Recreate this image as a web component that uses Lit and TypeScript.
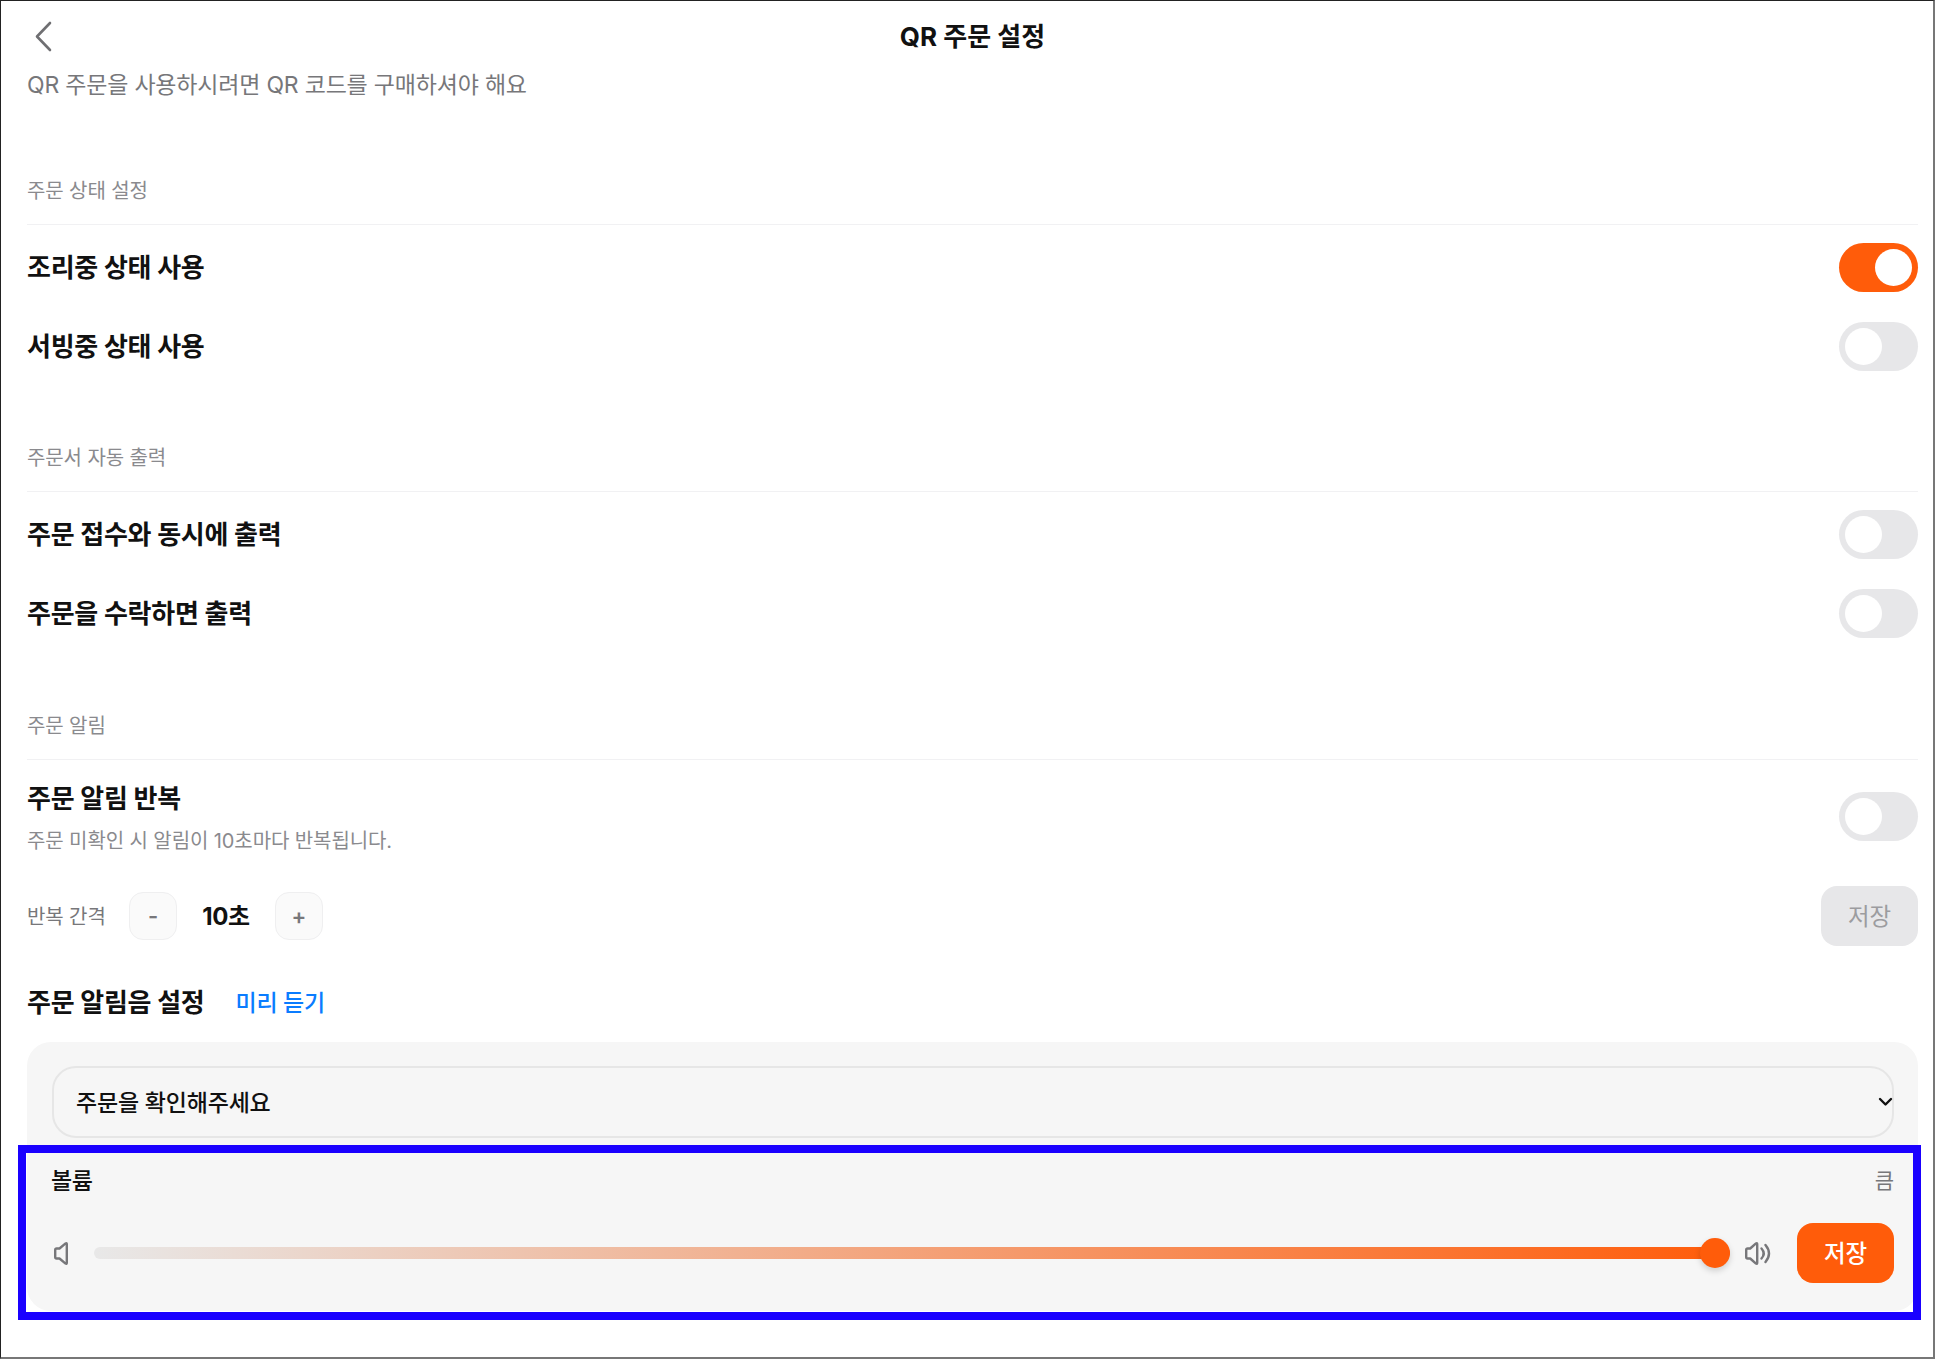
import { LitElement, html, css } from "lit";
import { customElement } from "lit/decorators.js";

@customElement("app-root")
export class AppRoot extends LitElement {
  static styles = css`
    :host {
      display: block;
      position: relative;
      width: 1936px;
      height: 1360px;
      box-sizing: border-box;
      background: #fff;
      font-family: Inter, "Noto Sans CJK KR", "Noto Sans", sans-serif;
      color: #111;
    }
    .frame {
      width: 1935px;
      height: 1359px;
      box-sizing: border-box;
      border-top: 1px solid #222;
      border-left: 1px solid #222;
      border-right: 2px solid #777;
      border-bottom: 2px solid #777;
      padding: 0 15px 0 26px;
      display: flex;
      flex-direction: column;
      overflow: hidden;
    }
    .header {
      height: 69px;
      flex: none;
      display: flex;
      align-items: center;
      justify-content: center;
      position: relative;
    }
    .back { position: absolute; left: 3px; top: 19px; width: 24px; height: 32px; }
    .title { font-size: 26px; font-weight: 700; letter-spacing: 0; padding-bottom: 3px; }
    .sub { font-size: 23px; line-height: 30px; height: 30px; color: #77777a; letter-spacing: -0.2px; flex: none; }
    .sec-title {
      font-size: 20px;
      line-height: 26px;
      color: #8a8a8e;
      letter-spacing: -0.1px;
      padding-bottom: 20px;
      border-bottom: 1px solid #f1f1f3;
    }
    .sec1 { margin-top: 78px; }
    .sec2 { margin-top: 74px; }
    .sec3 { margin-top: 75px; }
    .list { padding-top: 18px; display: flex; flex-direction: column; gap: 30px; }
    .row { display: flex; align-items: center; justify-content: space-between; height: 49px; }
    .label { font-size: 26px; font-weight: 700; letter-spacing: -0.25px; padding-bottom: 4px; }
    .toggle {
      width: 79px;
      height: 49px;
      border-radius: 25px;
      background: #e7e7e9;
      box-sizing: border-box;
      padding: 6px;
      display: flex;
      flex: none;
    }
    .toggle.on { background: #ff5c0a; justify-content: flex-end; }
    .knob { width: 37px; height: 37px; border-radius: 50%; background: #fff; }
    .repeat { margin-top: 19px; display: flex; align-items: flex-start; justify-content: space-between; }
    .repeat-text { display: flex; flex-direction: column; padding-top: 2px; }
    .repeat-text .label { line-height: 36px; padding-bottom: 0; }
    .desc { font-size: 20px; line-height: 28px; margin-top: 10px; color: #8a8a8e; letter-spacing: -0.1px; }
    .repeat .toggle { margin-top: 13px; }
    .interval { margin-top: 31px; height: 60px; display: flex; align-items: center; }
    .int-label { font-size: 20px; color: #77777a; letter-spacing: -0.1px; width: 102px; flex: none; padding-bottom: 2px; }
    .step {
      width: 48px;
      height: 48px;
      box-sizing: border-box;
      border: 1px solid #efeff0;
      border-radius: 14px;
      background: #fafafa;
      display: flex;
      align-items: center;
      justify-content: center;
      font-size: 22px;
      font-weight: 600;
      color: #77777a;
    }
    .val { width: 98px; text-align: center; font-size: 24px; font-weight: 700; letter-spacing: -0.3px; padding-bottom: 3px; }
    .btn {
      width: 97px;
      height: 60px;
      box-sizing: border-box;
      padding-bottom: 2px;
      border-radius: 16px;
      display: flex;
      align-items: center;
      justify-content: center;
      font-size: 23.5px;
      flex: none;
    }
    .btn.off { margin-left: auto; background: #e7e7e9; color: #9c9c9f; }
    .btn.on { background: #ff5c0a; color: #fff; font-weight: 500; }
    .sound-head { margin-top: 36px; display: flex; align-items: center; gap: 31px; height: 40px; }
    .link { font-size: 23px; font-weight: 500; color: #0a7cff; letter-spacing: -0.3px; padding-bottom: 2px; }
    .head-label { font-size: 26px; font-weight: 700; letter-spacing: -0.25px; padding-bottom: 3px; }
    .panel {
      margin-top: 20px;
      background: #f6f6f6;
      border-radius: 24px;
      padding: 24px 24px 28px 25px;
      height: 269px;
      box-sizing: border-box;
      flex: none;
    }
    .select-wrap { position: relative; }
    select {
      width: 100%;
      height: 72px;
      box-sizing: border-box;
      border: 2px solid #e6e6e6;
      border-radius: 24px;
      background: #f6f6f6;
      appearance: none;
      font: 500 23px Inter, "Noto Sans CJK KR", sans-serif;
      letter-spacing: -0.2px;
      color: #111;
      padding: 2px 4px 0 22px;
      display: block;
    }
    .chev { position: absolute; right: 1px; top: 31px; width: 15px; height: 10px; pointer-events: none; }
    .vol-head { margin-top: 25px; display: flex; justify-content: space-between; align-items: center; height: 32px; }
    .vol-title { font-size: 23px; font-weight: 500; letter-spacing: -0.4px; margin-left: -1px; }
    .vol-val { font-size: 21px; color: #77777a; }
    .vol-row { margin-top: 28px; height: 60px; display: flex; align-items: center; }
    .ico-l { width: 20px; height: 26px; flex: none; margin-right: 22px; }
    .track-wrap { position: relative; flex: 1; height: 12px; }
    .track {
      height: 12px;
      border-radius: 6px;
      background: linear-gradient(90deg, #e8e8e8, #ff5c0a);
    }
    .thumb {
      position: absolute;
      right: 0;
      top: -9px;
      width: 30px;
      height: 30px;
      border-radius: 50%;
      background: #ff5c0a;
      box-shadow: 0 3px 6px rgba(0, 0, 0, 0.16);
    }
    .ico-r { width: 30px; height: 26px; flex: none; margin: 0 24px 0 13px; }
    .highlight {
      position: absolute;
      left: 18px;
      top: 1145px;
      width: 1903px;
      height: 175px;
      box-sizing: border-box;
      border: 8px solid #1a00ff;
      pointer-events: none;
    }
  `;

  private toggle(on = false) {
    return html`<div class="toggle ${on ? "on" : ""}"><div class="knob"></div></div>`;
  }

  private row(label: string, on = false) {
    return html`<div class="row"><span class="label">${label}</span>${this.toggle(on)}</div>`;
  }

  render() {
    return html`
      <div class="frame">
        <div class="header">
          <svg class="back" viewBox="0 0 24 32" fill="none" stroke="#6f6f72" stroke-width="2.6" stroke-linecap="round" stroke-linejoin="round">
            <path d="M20 3 L7 16.5 L20 30" />
          </svg>
          <span class="title">QR 주문 설정</span>
        </div>
        <div class="sub">QR 주문을 사용하시려면 QR 코드를 구매하셔야 해요</div>

        <div class="sec-title sec1">주문 상태 설정</div>
        <div class="list">
          ${this.row("조리중 상태 사용", true)}
          ${this.row("서빙중 상태 사용")}
        </div>

        <div class="sec-title sec2">주문서 자동 출력</div>
        <div class="list">
          ${this.row("주문 접수와 동시에 출력")}
          ${this.row("주문을 수락하면 출력")}
        </div>

        <div class="sec-title sec3">주문 알림</div>
        <div class="repeat">
          <div class="repeat-text">
            <span class="label">주문 알림 반복</span>
            <span class="desc">주문 미확인 시 알림이 10초마다 반복됩니다.</span>
          </div>
          ${this.toggle()}
        </div>
        <div class="interval">
          <span class="int-label">반복 간격</span>
          <div class="step">-</div>
          <span class="val">10초</span>
          <div class="step">+</div>
          <div class="btn off">저장</div>
        </div>

        <div class="sound-head">
          <span class="head-label">주문 알림음 설정</span>
          <span class="link">미리 듣기</span>
        </div>

        <div class="panel">
          <div class="select-wrap">
            <select>
              <option>주문을 확인해주세요</option>
            </select>
            <svg class="chev" viewBox="0 0 15 10" fill="none" stroke="#111" stroke-width="2.4" stroke-linecap="round" stroke-linejoin="round">
              <path d="M2 2 L7.5 7.5 L13 2" />
            </svg>
          </div>
          <div class="vol-head">
            <span class="vol-title">볼륨</span>
            <span class="vol-val">큼</span>
          </div>
          <div class="vol-row">
            <svg class="ico-l" viewBox="0 0 20 26" fill="none" stroke="#77777a" stroke-width="2.4" stroke-linejoin="round">
              <path d="M14.8 4.2 Q14.8 2.6 13.6 3.4 L7.5 8.5 H4.6 Q3.2 8.5 3.2 10 V17 Q3.2 18.5 4.6 18.5 H7.5 L13.6 23.6 Q14.8 24.4 14.8 22.8 Z" />
            </svg>
            <div class="track-wrap">
              <div class="track"></div>
              <div class="thumb"></div>
            </div>
            <svg class="ico-r" viewBox="0 0 30 26" fill="none" stroke="#77777a" stroke-width="2.4" stroke-linecap="round" stroke-linejoin="round">
              <path d="M14.2 4.2 Q14.2 2.6 13 3.4 L7.2 8.5 H4.6 Q3.2 8.5 3.2 10 V17 Q3.2 18.5 4.6 18.5 H7.2 L13 23.6 Q14.2 24.4 14.2 22.8 Z" />
              <path d="M18.5 8.5 Q23 13.5 18.5 18.5" />
              <path d="M22.5 5 Q29.5 13.5 22.5 22" />
            </svg>
            <div class="btn on">저장</div>
          </div>
        </div>
      </div>
      <div class="highlight"></div>
    `;
  }
}
